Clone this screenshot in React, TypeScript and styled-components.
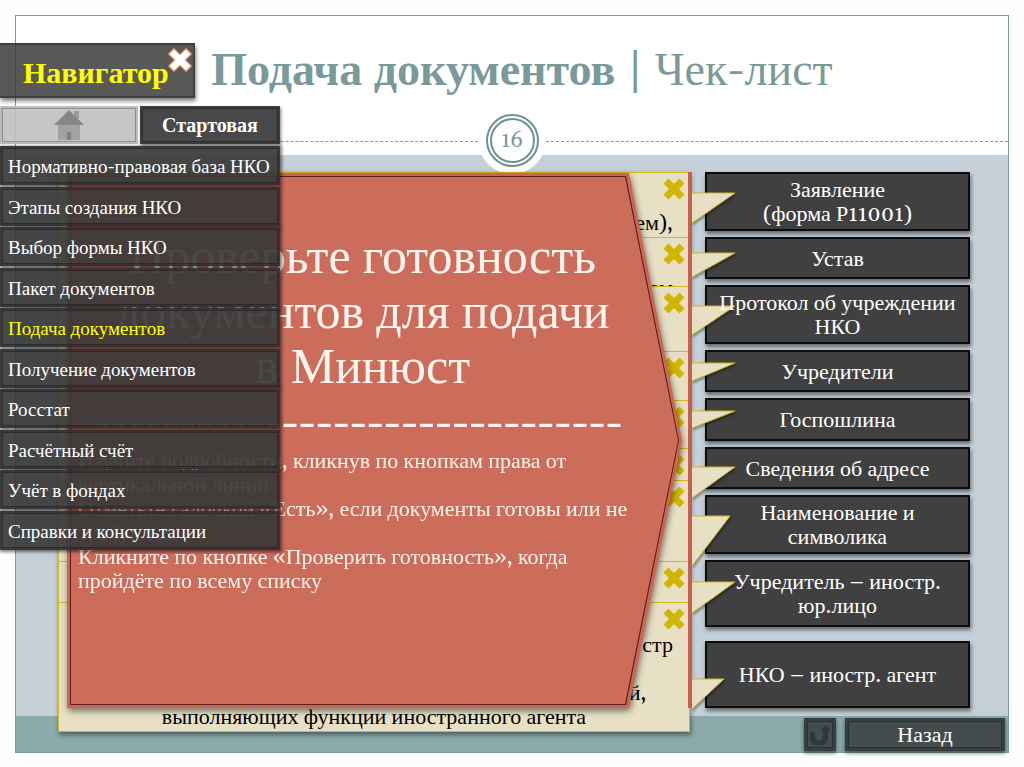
import React from "react";
import styled, { createGlobalStyle } from "styled-components";

const Global = createGlobalStyle`
  *, *::before, *::after { box-sizing: border-box; }
  body {
    margin: 0;
    background: #fefefe;
    font-family: Georgia, Gelasio, "Liberation Serif", serif;
  }
  button { font-family: inherit; cursor: pointer; }
  a { text-decoration: none; }
`;

const Page = styled.div`
  position: relative;
  min-height: 100vh;
  padding: 15px;
`;

const Frame = styled.main`
  display: flex;
  flex-direction: column;
  border: 1px solid #7d9c9c;
`;

const Header = styled.header`
  position: relative;
  z-index: 1;
  height: 139px;
  padding: 30px 0 0 20px;
  background: #fff;
`;

const Title = styled.h1`
  margin: 0;
  color: #7a9a9a;
  font-size: 46px;
  font-weight: 400;
  line-height: 52px;
  text-align: center;
`;

const Divider = styled.div`
  position: absolute;
  left: 0;
  right: 0;
  top: 90px;
  display: flex;
  align-items: center;
  &::before, &::after {
    content: "";
    flex: 1;
    border-top: 1px dashed #7d9c9c;
    margin-top: 3px;
  }
`;

const PageBadge = styled.div`
  width: 68px;
  height: 68px;
  border-radius: 50%;
  background: #fff;
  display: grid;
  place-items: center;
`;

const PageNumber = styled.span`
  width: 53px;
  height: 53px;
  border: 6px double #6f9192;
  border-radius: 50%;
  color: #7a9a9a;
  font-size: 22px;
  line-height: 42px;
  text-align: center;
`;

const Board = styled.section`
  display: grid;
  grid-template-columns: minmax(0, 1fr) 265px;
  column-gap: 15px;
  padding: 17px 38px 0 42px;
  background: #c5d0d8;
`;

const Stack = styled.div`
  position: relative;
  z-index: 1;
  display: grid;
  grid-template-columns: minmax(0, 1fr);
  margin-bottom: -16px;
  > * { grid-area: 1 / 1; }
`;

const CheckList = styled.ul`
  list-style: none;
  margin: 0;
  padding: 0;
  box-shadow: 1px 3px 5px rgba(0, 0, 0, 0.45);
`;

const CheckRow = styled.li<{ $height: number; $gap?: number }>`
  display: flex;
  flex-direction: column;
  align-items: flex-end;
  height: ${(p) => p.$height}px;
  padding: 5px 4px 0;
  overflow: hidden;
  border: 1px solid #cdb81e;
  border-bottom-width: 0;
  background: #e8e0c5;
  &:last-child { border-bottom-width: 1px; }
  > button { margin-bottom: ${(p) => p.$gap ?? 0}px; }
`;

const MarkButton = styled.button`
  flex: none;
  width: 22px;
  height: 22px;
  padding: 0;
  border: 0;
  background: none;
  color: #d0b600;
  svg { display: block; }
`;

const RowText = styled.p<{ $center?: boolean }>`
  align-self: ${(p) => (p.$center ? "center" : "flex-end")};
  margin: 0;
  padding: ${(p) => (p.$center ? "0" : "0 12px 0 0")};
  font-size: 22px;
  line-height: 24px;
  white-space: pre;
  text-align: right;
`;

const RedLine = styled.div`
  justify-self: end;
  width: 4px;
  height: 536px;
  margin-right: -2px;
  background: #c95f4e;
`;

const CalloutShadow = styled.div`
  z-index: 1;
  height: 535px;
  margin: 1px 8px 0 9px;
  filter: drop-shadow(1px 3px 3px rgba(0, 0, 0, 0.5));
`;

const Callout = styled.section`
  --arrow: polygon(0 0, calc(100% - 53px) 0, 100% 50%, calc(100% - 53px) 100%, 0 100%);
  position: relative;
  isolation: isolate;
  height: 100%;
  padding: 58px 53px 0 11px;
  clip-path: var(--arrow);
  background: #cb6654;
  color: #fff4ee;
  &::before, &::after {
    content: "";
    position: absolute;
    z-index: -1;
    inset: 3px;
    clip-path: var(--arrow);
    background: #5c1d18;
  }
  &::after {
    inset: 4px;
    background: #cc6c5b;
  }
`;

const CalloutTitle = styled.h2`
  margin: 0 0 0 18px;
  font-size: 50px;
  font-weight: 400;
  line-height: 55px;
  text-align: center;
`;

const Dashes = styled.div`
  height: 54px;
  margin-left: 16px;
  font-size: 45px;
  font-weight: 700;
  line-height: 56px;
  white-space: nowrap;
`;

const CalloutText = styled.p`
  margin: 0;
  font-size: 22px;
  line-height: 24px;
  white-space: pre;
`;

const Topics = styled.nav`
  display: flex;
  flex-direction: column;
  gap: 6px;
`;

const TopicWrap = styled.div<{ $gapBefore?: number }>`
  position: relative;
  margin-top: ${(p) => p.$gapBefore ?? 0}px;
`;

const TopicButton = styled.button<{ $height: number }>`
  display: block;
  width: 100%;
  height: ${(p) => p.$height}px;
  padding: 3px 6px 0;
  border: 2px solid #0c0c0c;
  background: #404040;
  box-shadow: 1px 3px 4px rgba(0, 0, 0, 0.5);
  color: #fff;
  font-size: 22px;
  line-height: 24px;
  white-space: pre-line;
`;

const TopicLabel = styled.span`
  position: relative;
  z-index: 2;
`;

const Pointer = styled.svg`
  position: absolute;
  z-index: 1;
  left: -13px;
  overflow: visible;
  filter: drop-shadow(1px 2px 1px rgba(0, 0, 0, 0.35));
  pointer-events: none;
`;

const Footer = styled.footer`
  display: flex;
  justify-content: flex-end;
  gap: 9px;
  height: 36px;
  padding: 2px 3px 0 0;
  background: #8aabac;
`;

const DarkButton = styled.button<{ $width: number }>`
  position: relative;
  width: ${(p) => p.$width}px;
  height: 33px;
  padding: 2px 0 0;
  border: 3px solid #374041;
  outline: 1px solid #2b3030;
  outline-offset: -4px;
  background: #454c4d;
  box-shadow: 0 2px 4px rgba(0, 0, 0, 0.55);
  color: #fff;
  font-size: 22px;
  line-height: 24px;
  svg { display: block; margin: auto; }
`;

const Navigator = styled.nav`
  position: absolute;
  z-index: 3;
  left: 0;
  top: 43px;
  width: 280px;
`;

const NavHead = styled.div`
  display: flex;
  align-items: center;
  width: 195px;
  height: 55px;
  padding: 6px 0 0 23px;
  border: 2px solid rgba(40, 40, 40, 0.5);
  border-left: 0;
  background: rgba(60, 60, 60, 0.86);
  box-shadow: 1px 3px 4px rgba(0, 0, 0, 0.5);
  color: #ff0;
  font-size: 30px;
  font-weight: 700;
  line-height: 32px;
`;

const CloseButton = styled.button`
  position: absolute;
  left: 168px;
  top: 5px;
  width: 24px;
  height: 24px;
  padding: 0;
  border: 0;
  background: none;
  color: #fff;
  svg { display: block; }
`;

const NavTop = styled.div`
  display: grid;
  grid-template-columns: 138px 140px;
  gap: 2px;
  margin-top: 8px;
`;

const HomeLink = styled.a`
  display: grid;
  place-items: center;
  height: 38px;
  border: 2px solid #bdbdbd;
  outline: 1px solid #8e8e8e;
  outline-offset: -3px;
  background: rgba(190, 190, 190, 0.88);
`;

const StartLink = styled.a`
  height: 38px;
  border: 2px solid #3c3c3c;
  outline: 1px solid #2a2a2a;
  outline-offset: -3px;
  background: #484848;
  box-shadow: 1px 2px 3px rgba(0, 0, 0, 0.5);
  color: #fff;
  font-size: 20px;
  font-weight: 700;
  line-height: 36px;
  text-align: center;
`;

const NavList = styled.ul`
  display: flex;
  flex-direction: column;
  justify-content: space-between;
  height: 404px;
  margin: 2px 0 0;
  padding: 0;
  list-style: none;
`;

const NavLink = styled.a<{ $active?: boolean }>`
  display: block;
  height: 39px;
  padding-left: 6px;
  border: 2px solid rgba(30, 30, 30, 0.3);
  outline: 1px solid rgba(25, 25, 25, 0.55);
  outline-offset: -3px;
  background: rgba(56, 56, 56, 0.92);
  box-shadow: 1px 1px 3px 1px rgba(0, 0, 0, 0.5);
  color: ${(p) => (p.$active ? "#ff0" : "#fff")};
  font-size: 19px;
  line-height: 38px;
  white-space: nowrap;
`;

function Cross({ size, outline }: { size: number; outline?: string }) {
  return (
    <svg width={size} height={size} viewBox="0 0 22 22" aria-hidden="true">
      <path
        d="M5.5 0.5 11 6 16.5 0.5 21.5 5.5 16 11 21.5 16.5 16.5 21.5 11 16 5.5 21.5 0.5 16.5 6 11 0.5 5.5Z"
        fill="currentColor"
        stroke={outline}
        strokeWidth={outline ? 1 : 0}
      />
    </svg>
  );
}

const rows: { height: number; gap?: number; text?: string; centered?: string }[] = [
  { height: 65, gap: 12, text: "ем)," },
  { height: 49, gap: 12, text: "зем" },
  { height: 65 },
  { height: 49 },
  { height: 48 },
  { height: 32 },
  { height: 81 },
  { height: 41 },
  { height: 130, gap: 4, text: "стр\n\nй,     ", centered: "выполняющих функции иностранного агента" },
];

const topics = [
  { label: "Заявление\n(форма Р11001)", height: 59, top: 21, tail: 30, reach: 43 },
  { label: "Устав", height: 42, top: 16, tail: 24, reach: 43 },
  { label: "Протокол об учреждении НКО", height: 59, top: 21, tail: 29, reach: 43 },
  { label: "Учредители", height: 42, top: 13, tail: 18, reach: 43 },
  { label: "Госпошлина", height: 43, top: 13, tail: 17, reach: 43 },
  { label: "Сведения об адресе", height: 42, top: 20, tail: 31, reach: 43 },
  { label: "Наименование и\nсимволика", height: 59, top: 21, tail: 50, reach: 38 },
  { label: "Учредитель – иностр.\nюр.лицо", height: 67, top: 22, tail: 31, reach: 43 },
  { label: "НКО – иностр. агент", height: 67, top: 38, tail: 30, reach: 32, gapBefore: 8 },
];

const navItems = [
  "Нормативно-правовая база НКО",
  "Этапы создания НКО",
  "Выбор формы НКО",
  "Пакет документов",
  "Подача документов",
  "Получение документов",
  "Росстат",
  "Расчётный счёт",
  "Учёт в фондах",
  "Справки и консультации",
];

export default function App() {
  return (
    <Page>
      <Global />
      <Frame>
        <Header>
          <Title>
            <b>Подача документов</b> | Чек-лист
          </Title>
          <Divider>
            <PageBadge>
              <PageNumber>16</PageNumber>
            </PageBadge>
          </Divider>
        </Header>
        <Board>
          <Stack>
            <CheckList>
              {rows.map((row, i) => (
                <CheckRow key={i} $height={row.height} $gap={row.gap}>
                  <MarkButton aria-label="Закрыть">
                    <Cross size={22} />
                  </MarkButton>
                  {row.text && <RowText>{row.text}</RowText>}
                  {row.centered && <RowText $center>{row.centered}</RowText>}
                </CheckRow>
              ))}
            </CheckList>
            <RedLine />
            <CalloutShadow>
              <Callout>
                <CalloutTitle>
                  Проверьте готовность
                  <br />
                  документов для подачи
                  <br />в Минюст
                </CalloutTitle>
                <Dashes>{"-".repeat(31)}</Dashes>
                <CalloutText>
                  {"Изучите подробности, кликнув по кнопкам права от\nвертикальной линии\nОтметьте галочкой «Есть», если документы готовы или не\nтребуются\nКликните по кнопке «Проверить готовность», когда\nпройдёте по всему списку"}
                </CalloutText>
              </Callout>
            </CalloutShadow>
          </Stack>
          <Topics>
            {topics.map((t) => (
              <TopicWrap key={t.label} $gapBefore={t.gapBefore}>
                <TopicButton $height={t.height}>
                  <TopicLabel>{t.label}</TopicLabel>
                </TopicButton>
                <Pointer
                  width={t.reach}
                  height={t.tail}
                  style={{ top: t.top }}
                  aria-hidden="true"
                >
                  <path d={`M0 0H${t.reach}L0 ${t.tail}`} fill="#e8e0c5" stroke="#cdb81e" />
                </Pointer>
              </TopicWrap>
            ))}
          </Topics>
        </Board>
        <Footer>
          <DarkButton $width={32} aria-label="Вернуться">
            <svg width="24" height="25" viewBox="0 0 24 25" aria-hidden="true">
              <path
                d="M2 9H7V14C7 19 15 19 15 14V8H12L17.500 2 23 8H20V15C20 25 2 25 2 15Z"
                fill="#2e3839"
              />
            </svg>
          </DarkButton>
          <DarkButton $width={160}>Назад</DarkButton>
        </Footer>
      </Frame>

      <Navigator>
        <NavHead>Навигатор</NavHead>
        <CloseButton aria-label="Закрыть навигатор">
          <Cross size={24} outline="#e08a5a" />
        </CloseButton>
        <NavTop>
          <HomeLink href="#home" aria-label="Домой">
            <svg width="30" height="30" viewBox="0 0 30 30" aria-hidden="true">
              <path d="M4 14H26V30H4Z" fill="#a2a2a2" />
              <path d="M20 1H25V9H20Z" fill="#9a9a9a" />
              <path d="M15 0 30 15H0Z" fill="#868686" />
              <path d="M13 22H17V30H13Z" fill="#808080" />
            </svg>
          </HomeLink>
          <StartLink href="#start">Стартовая</StartLink>
        </NavTop>
        <NavList>
          {navItems.map((item) => (
            <li key={item}>
              <NavLink href="#section" $active={item === "Подача документов"}>
                {item}
              </NavLink>
            </li>
          ))}
        </NavList>
      </Navigator>
    </Page>
  );
}
